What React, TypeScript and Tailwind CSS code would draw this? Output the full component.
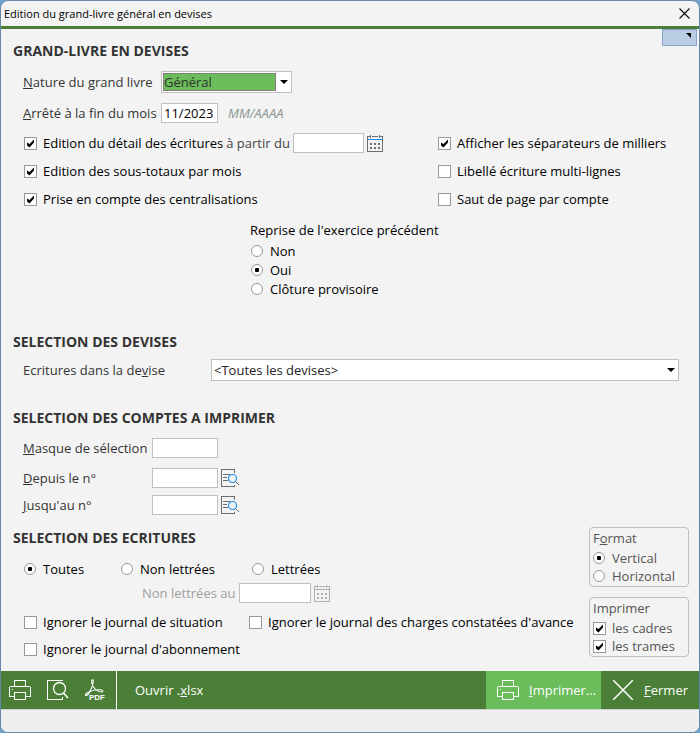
import { ReactNode, useState } from "react";

const field = "h-5 border border-[#c0c0c0] bg-white px-[2px] text-black outline-none";

function Heading({ children }: { children: ReactNode }) {
  return <h2 className="pl-3 text-[14px] leading-5 font-bold text-[#333]">{children}</h2>;
}

type ToggleProps = {
  label: string;
  checked: boolean;
  onChange: () => void;
  name?: string;
  className?: string;
};

function Check({ label, checked, onChange, className = "" }: ToggleProps) {
  return (
    <label className={`flex h-5 items-center gap-[6px] whitespace-nowrap ${className}`}>
      <span className="relative flex h-[13px] w-[13px] shrink-0">
        <input
          type="checkbox"
          checked={checked}
          onChange={onChange}
          className="h-[13px] w-[13px] appearance-none border border-[#999] bg-white"
        />
        {checked && (
          <svg className="pointer-events-none absolute inset-0" width="13" height="13" viewBox="0 0 13 13">
            <path d="M3 5.5v3l2.5 2L10 5.5v-3L5.5 7z" fill="#000" />
          </svg>
        )}
      </span>
      {label}
    </label>
  );
}

function Radio({ label, checked, onChange, name, className = "" }: ToggleProps) {
  return (
    <label className={`flex items-center gap-[7px] whitespace-nowrap ${className}`}>
      <input
        type="radio"
        name={name}
        checked={checked}
        onChange={onChange}
        className="grid h-3 w-3 shrink-0 appearance-none place-content-center rounded-full border border-[#999] bg-white checked:before:h-1 checked:before:w-1 checked:before:rounded-[1px] checked:before:bg-black checked:before:content-['']"
      />
      {label}
    </label>
  );
}

function CalendarIcon({ disabled }: { disabled?: boolean }) {
  const main = disabled ? "#b0b0b0" : "#6e6e6e";
  return (
    <svg width="16" height="17" viewBox="0 0 16 17" fill="none" shapeRendering="crispEdges">
      <path d="M3 1.5H0.5v15h15v-15H13M5 1.5h6" stroke={main} />
      <path d="M3.5 0v3M12.5 0v3" stroke={main} />
      <path d="M1 4.5h14" stroke={disabled ? "#b0b0b0" : "#1e90f0"} />
      <path d="M3 8h2v2H3zM7 8h2v2H7zM11 8h2v2h-2zM3 12h2v2H3zM7 12h2v2H7zM11 12h2v2h-2z" fill={main} />
    </svg>
  );
}

function LookupIcon() {
  return (
    <svg width="18" height="18" viewBox="0 0 18 18" fill="none">
      <path d="M13.5 3.5v-3H0.5v17h13v-2M2 5.5h7M2 8.5h4M2 11.5h5" stroke="#6e6e6e" shapeRendering="crispEdges" />
      <circle cx="11.5" cy="9.5" r="4" stroke="#1e90f0" strokeWidth="1.2" />
      <path d="M14.5 12.5l3.5 3.5" stroke="#6e6e6e" />
    </svg>
  );
}

function PrinterIcon() {
  return (
    <svg width="22" height="20" viewBox="0 0 22 20" fill="none" stroke="#fff" shapeRendering="crispEdges">
      <path d="M5.5 7V0.5h11V7" />
      <path d="M5 16.5H0.5v-9l1-1h19l1 1v9H17" />
      <path d="M5.5 12.5h11v7h-11zM3 9.5h1" />
    </svg>
  );
}

function PreviewIcon() {
  return (
    <svg width="22" height="20" viewBox="0 0 22 20" fill="none" stroke="#fff">
      <path d="M15.5 1V0.5H0.5v19h15v-3" shapeRendering="crispEdges" />
      <circle cx="12.5" cy="8.5" r="6" strokeWidth="1.3" />
      <path d="M16.5 13l4.5 5" strokeWidth="1.5" />
    </svg>
  );
}

function PdfIcon() {
  return (
    <svg width="21" height="23" viewBox="0 0 21 23" fill="none">
      <path
        d="M0.5 16.5c1.8.8 4-2.5 6-7.500C8.200 5 9 1 7.600.8 5.900.7 6.400 4.500 8.400 7.800c1.800 3 5.500 5.200 8.500 5.200 1.500-.3 1-2-1.500-2.200-4-.3-10 1-13.700 3.500-.9.7-1.400 1.800-1.200 2.200z"
        stroke="#fff"
        strokeWidth="1.1"
      />
      <text x="4" y="21" fill="#fff" fontSize="8" fontWeight="bold" fontFamily="Liberation Sans, sans-serif">
        PDF
      </text>
    </svg>
  );
}

function Arrow() {
  return (
    <svg className="pointer-events-none shrink-0" width="8" height="4" viewBox="0 0 8 4">
      <path d="M0 0h8L4 4z" fill="#000" />
    </svg>
  );
}

export default function App() {
  const [opts, setOpts] = useState<Record<string, boolean>>({
    detail: true,
    sousTotaux: true,
    centralisations: true,
    milliers: true,
    cadres: true,
    trames: true,
  });
  const [reprise, setReprise] = useState("Oui");
  const [lettrage, setLettrage] = useState("Toutes");
  const [format, setFormat] = useState("Vertical");

  const check = (key: string) => ({
    checked: !!opts[key],
    onChange: () => setOpts({ ...opts, [key]: !opts[key] }),
  });

  return (
    <div className="min-h-screen bg-[#6fa3cf] font-['Open_Sans',sans-serif] text-[13px] leading-5 text-black">
      <div className="flex min-h-screen flex-col overflow-hidden rounded-lg border border-[#6488a8] bg-[#f3f3f3]">
        <header className="flex h-7 items-center justify-between border-b-3 border-[#4b7f37] pr-[9px] pl-[3px]">
          <h1 className="text-[11px]">Edition du grand-livre général en devises</h1>
          <button aria-label="Fermer la fenêtre">
            <svg width="11" height="11" viewBox="0 0 11 11" stroke="#111" strokeWidth="1.2">
              <path d="M.5.5l10 10M10.5.5l-10 10" />
            </svg>
          </button>
        </header>

        <main className="grow">
          <div className="flex items-start justify-between pr-[2px]">
            <div className="pt-3">
              <Heading>GRAND-LIVRE EN DEVISES</Heading>
            </div>
            <button
              aria-label="Options"
              className="flex h-[17px] w-[35px] justify-end border border-[#86a3c8] bg-[#b8cce4] pt-[3px] pr-[5px]"
            >
              <svg width="5" height="5" viewBox="0 0 5 5">
                <path d="M0 0h5v5z" fill="#000" />
              </svg>
            </button>
          </div>

          <div className="mt-[10px] flex items-center pl-[22px]">
            <label htmlFor="nature" className="w-[138px] text-[#333]">
              <u>N</u>ature du grand livre
            </label>
            <div className="flex h-[22px] w-[131px] items-center gap-1 border border-[#c0c0c0] bg-white p-px pr-[3px]">
              <select
                id="nature"
                className="h-[18px] min-w-0 flex-1 appearance-none border border-dotted border-[#a040a0] bg-[#6abd5a] leading-4 text-[#333] outline-none"
              >
                <option>Général</option>
              </select>
              <Arrow />
            </div>
          </div>

          <div className="mt-[10px] flex items-center pl-[22px]">
            <label htmlFor="mois" className="w-[138px] text-[#333]">
              <u>A</u>rrêté à la fin du mois
            </label>
            <input id="mois" defaultValue="11/2023" className={`${field} w-[57px]`} />
            <span className="ml-[10px] text-[#8a9490] italic">MM/AAAA</span>
          </div>

          <div className="mt-[10px] grid grid-cols-[1fr_261px] gap-y-2 pl-[23px]">
            <div className="flex items-center">
              <Check label="Edition du détail des écritures" {...check("detail")} />
              <label htmlFor="partir" className="ml-[3px] text-[#444]">
                à partir du
              </label>
              <input id="partir" className={`${field} ml-[3px] w-[71px]`} />
              <button className="ml-[3px]" aria-label="Choisir une date">
                <CalendarIcon />
              </button>
            </div>
            <Check label="Afficher les séparateurs de milliers" {...check("milliers")} />
            <Check label="Edition des sous-totaux par mois" {...check("sousTotaux")} />
            <Check label="Libellé écriture multi-lignes" {...check("libelle")} />
            <Check label="Prise en compte des centralisations" {...check("centralisations")} />
            <Check label="Saut de page par compte" {...check("saut")} />
          </div>

          <fieldset className="mt-[11px] pl-[249px]">
            <legend className="mb-px h-5">Reprise de l'exercice précédent</legend>
            {["Non", "Oui", "Clôture provisoire"].map((r) => (
              <Radio
                key={r}
                name="reprise"
                label={r}
                checked={reprise === r}
                onChange={() => setReprise(r)}
                className="h-[19px] pl-px"
              />
            ))}
          </fieldset>

          <div className="mt-[34px]">
            <Heading>SELECTION DES DEVISES</Heading>
          </div>
          <div className="mt-[7px] flex items-center pr-5 pl-[22px]">
            <label htmlFor="devise" className="w-[188px] text-[#333]">
              Ecritures dans la de<u>v</u>ise
            </label>
            <div className="flex h-[22px] flex-1 items-center border border-[#c0c0c0] bg-white pr-[3px] pl-[2px]">
              <select id="devise" className="min-w-0 flex-1 appearance-none text-[#222] outline-none">
                <option>&lt;Toutes les devises&gt;</option>
              </select>
              <Arrow />
            </div>
          </div>

          <div className="mt-[27px]">
            <Heading>SELECTION DES COMPTES A IMPRIMER</Heading>
          </div>
          <div className="mt-[10px] flex items-center pl-[22px]">
            <label htmlFor="masque" className="w-[129px] text-[#333]">
              <u>M</u>asque de sélection
            </label>
            <input id="masque" className={`${field} w-[66px]`} />
          </div>
          <div className="mt-[10px] flex items-center pl-[22px]">
            <label htmlFor="depuis" className="w-[129px] text-[#333]">
              <u>D</u>epuis le n°
            </label>
            <input id="depuis" className={`${field} w-[66px]`} />
            <button className="ml-[3px]" aria-label="Rechercher le premier compte">
              <LookupIcon />
            </button>
          </div>
          <div className="mt-[7px] flex items-center pl-[22px]">
            <label htmlFor="jusqu" className="w-[129px] text-[#333]">
              <u>J</u>usqu'au n°
            </label>
            <input id="jusqu" className={`${field} w-[66px]`} />
            <button className="ml-[3px]" aria-label="Rechercher le dernier compte">
              <LookupIcon />
            </button>
          </div>

          <div className="mt-3 flex justify-between pr-[10px]">
            <div className="pt-px">
              <Heading>SELECTION DES ECRITURES</Heading>
              <div className="mt-[11px] flex pl-[23px]">
                {["Toutes", "Non lettrées", "Lettrées"].map((l) => (
                  <Radio
                    key={l}
                    name="lettrage"
                    label={l}
                    checked={lettrage === l}
                    onChange={() => setLettrage(l)}
                    className={l === "Toutes" ? "w-[97px]" : "w-[131px]"}
                  />
                ))}
              </div>
              <div className="mt-1 flex items-center pl-[141px]">
                <label htmlFor="lettreAu" className="w-[97px] text-[#a0a0a0]">
                  Non lettrées au
                </label>
                <input id="lettreAu" disabled className={`${field} w-[72px]`} />
                <button disabled className="ml-[3px]" aria-label="Choisir une date">
                  <CalendarIcon disabled />
                </button>
              </div>
              <div className="mt-[9px] flex pl-[23px]">
                <Check label="Ignorer le journal de situation" className="w-[225px]" {...check("situation")} />
                <Check label="Ignorer le journal des charges constatées d'avance" {...check("charges")} />
              </div>
              <div className="mt-[7px] pl-[23px]">
                <Check label="Ignorer le journal d'abonnement" {...check("abonnement")} />
              </div>
            </div>

            <div className="flex w-[100px] flex-col gap-[10px] text-[#555]">
              <div role="radiogroup" aria-labelledby="format" className="h-[60px] rounded border border-[#c0c0c0] pl-[3px]">
                <p id="format" className="mb-px">
                  F<u>o</u>rmat
                </p>
                {["Vertical", "Horizontal"].map((f) => (
                  <Radio
                    key={f}
                    name="format"
                    label={f}
                    checked={format === f}
                    onChange={() => setFormat(f)}
                    className="h-[18px]"
                  />
                ))}
              </div>
              <div role="group" aria-labelledby="imprimer" className="h-[60px] rounded border border-[#c0c0c0] pl-[3px]">
                <p id="imprimer" className="mb-px">
                  Imprimer
                </p>
                <Check label="les cadres" className="h-[18px]" {...check("cadres")} />
                <Check label="les trames" className="h-[18px]" {...check("trames")} />
              </div>
            </div>
          </div>
        </main>

        <footer>
          <div className="flex h-[38px] items-stretch bg-[#4b7f37] text-white">
            <div className="flex w-[116px] items-center gap-4 border-r border-white pl-2">
              <button aria-label="Imprimer">
                <PrinterIcon />
              </button>
              <button aria-label="Aperçu">
                <PreviewIcon />
              </button>
              <button aria-label="Exporter en PDF">
                <PdfIcon />
              </button>
            </div>
            <button className="pl-[18px]">
              Ouvrir .<u>x</u>lsx
            </button>
            <button className="ml-auto flex w-[115px] items-center gap-[10px] bg-[#6abd5a] pl-[11px]">
              <PrinterIcon />
              <span>
                <u>I</u>mprimer...
              </span>
            </button>
            <button className="flex w-[98px] items-center justify-between pr-[11px] pl-3">
              <svg width="20" height="20" viewBox="0 0 20 20" stroke="#fff" strokeWidth="1.5">
                <path d="M0 0l20 20M20 0L0 20" />
              </svg>
              <span>
                <u>F</u>ermer
              </span>
            </button>
          </div>
          <div className="h-[23px] border-t border-[#d0d0d0] bg-[#efefef]" />
        </footer>
      </div>
    </div>
  );
}
